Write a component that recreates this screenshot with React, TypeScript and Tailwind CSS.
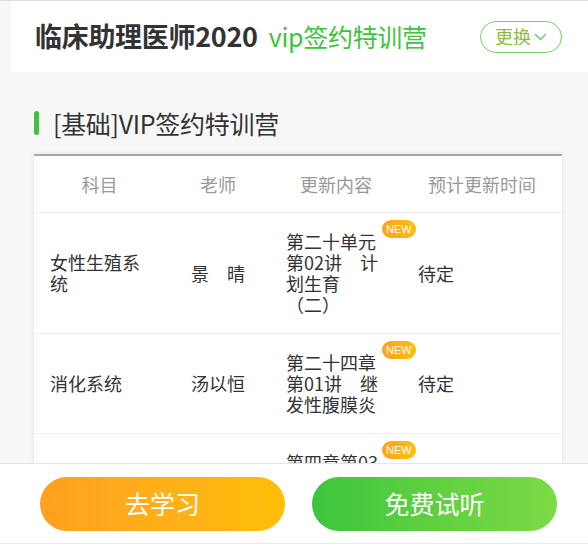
const rows = [
  { subject: "女性生殖系统", teacher: "景　晴", content: "第二十单元第02讲　计划生育（二）", time: "待定" },
  { subject: "消化系统", teacher: "汤以恒", content: "第二十四章第01讲　继发性腹膜炎", time: "待定" },
  { subject: "妇科肿瘤", teacher: "景　晴", content: "第四章第03讲　子宫内膜异位症", time: "待定" },
];

const App = () => {
  return (
    <div className="min-h-screen bg-[#f7f7f7] border-t border-[#dddddd] font-['Noto_Sans_CJK_SC','Liberation_Sans',sans-serif] text-[#333333] pb-[100px]">
      {/* header */}
      <div className="ml-[11px] bg-white h-[71px] flex items-center justify-between pl-[24px] pr-[26px]">
        <div className="flex items-baseline gap-[11px]">
          <span className="text-[27px] font-bold tracking-[-0.3px]">临床助理医师2020</span>
          <span className="text-[25px] text-[#3cc43c] tracking-[-0.3px]">vip签约特训营</span>
        </div>
        <button className="w-[82px] h-[32px] rounded-full border border-[#6fd46f] flex items-center justify-center gap-[3px] text-[18px] text-[#8cbf3c]">
          更换
          <svg width="13" height="8" viewBox="0 0 13 8" fill="none">
            <path d="M1 1l5.5 5.5L12 1" stroke="#5fcf5f" strokeWidth="1.4" />
          </svg>
        </button>
      </div>

      {/* section title */}
      <div className="flex items-center gap-[14px] pl-[34px] mt-[36px]">
        <div className="w-[5px] h-[24px] rounded-full bg-[#3cc43c]" />
        <h2 className="text-[25px] leading-[30px] tracking-[-0.3px]">[基础]VIP签约特训营</h2>
      </div>

      {/* table */}
      <div className="mx-[34px] w-[528px] mt-[16px] bg-white border-t-2 border-[#a9a9a9] shadow-[0_0_4px_rgba(0,0,0,0.1)]">
        <div className="grid grid-cols-[141px_95px_132px_160px] h-[57px] items-center text-[18px] text-[#999999] border-b border-[#eeeeee]">
          <div className="text-center pr-[10px]">科目</div>
          <div className="text-center pr-[9px]">老师</div>
          <div className="text-center">更新内容</div>
          <div className="text-center">预计更新时间</div>
        </div>
        {rows.map((r, i) => (
          <div
            key={i}
            className="grid grid-cols-[141px_95px_132px_160px] items-center py-[18px] text-[18px] leading-[21px] border-b border-[#eeeeee]"
          >
            <div className="pl-[16px] pr-[30px]">{r.subject}</div>
            <div className="pl-[16px]">{r.teacher}</div>
            <div className="pl-[16px]">
              <div className="relative w-[94px]">
                {r.content}
                <span className="absolute left-[96px] top-[-11px] h-[18px] px-[4px] rounded-full bg-gradient-to-r from-[#ffa11c] to-[#ffbf0a] text-white text-[11px] leading-[18px] font-['Liberation_Sans',sans-serif]">
                  NEW
                </span>
              </div>
            </div>
            <div className="pl-[16px]">{r.time}</div>
          </div>
        ))}
      </div>

      {/* bottom bar */}
      <div className="fixed inset-x-0 bottom-0 bg-white border-t border-[#e5e5e5] pb-[4px]">
        <div className="h-[80px] border-b border-[#e8e8e8] flex items-center pl-[40px] gap-[27px]">
          <button className="w-[245px] h-[54px] rounded-full bg-gradient-to-r from-[#ffa020] to-[#ffbe08] text-white text-[25px]">
            去学习
          </button>
          <button className="w-[245px] h-[54px] rounded-full bg-gradient-to-r from-[#3cc53c] to-[#7bdb44] text-white text-[25px]">
            免费试听
          </button>
        </div>
      </div>
    </div>
  );
};

export default App;
